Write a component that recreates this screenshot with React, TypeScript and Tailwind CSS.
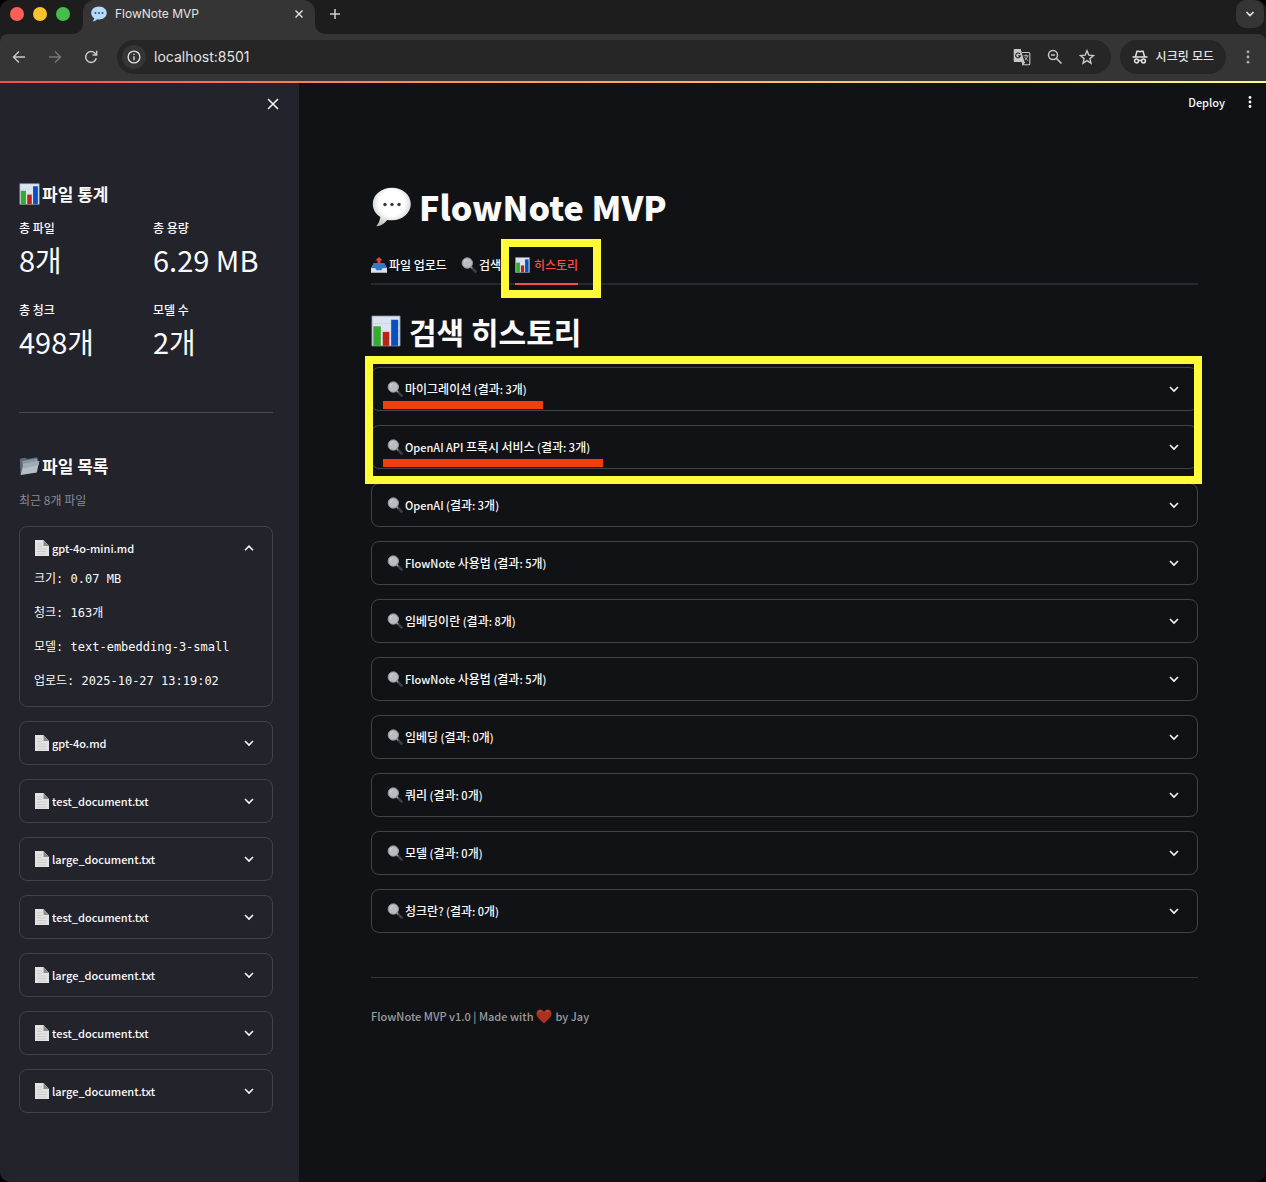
import { type ReactNode } from "react";

const files = [
  "gpt-4o.md",
  "test_document.txt",
  "large_document.txt",
  "test_document.txt",
  "large_document.txt",
  "test_document.txt",
  "large_document.txt",
];

const highlighted = [
  { query: "마이그레이션 (결과: 3개)", underline: "w-40" },
  { query: "OpenAI API 프록시 서비스 (결과: 3개)", underline: "w-[220px]" },
];

const history = [
  "OpenAI (결과: 3개)",
  "FlowNote 사용법 (결과: 5개)",
  "임베딩이란 (결과: 8개)",
  "FlowNote 사용법 (결과: 5개)",
  "임베딩 (결과: 0개)",
  "쿼리 (결과: 0개)",
  "모델 (결과: 0개)",
  "청크란? (결과: 0개)",
];

const metrics = [
  ["총 파일", "8개"],
  ["총 용량", "6.29 MB"],
  ["총 청크", "498개"],
  ["모델 수", "2개"],
];

const details = [
  "크기: 0.07 MB",
  "청크: 163개",
  "모델: text-embedding-3-small",
  "업로드: 2025-10-27 13:19:02",
];

/** Sets Hangul one step larger than the Latin text around it. */
function MixedText({ children }: { children: string }) {
  return children.split(/([가-힣]+)/).map((part, i) =>
    i % 2 ? (
      <span key={i} className="text-xs">
        {part}
      </span>
    ) : (
      part
    ),
  );
}

function ChartIcon({ className }: { className: string }) {
  return (
    <svg viewBox="0 0 32 34" className={className} aria-hidden="true">
      <rect x="1" y="1" width="30" height="32" fill="#dbe5f1" />
      <path d="M1 9h30M1 17h30M1 25h30" stroke="#c3cedd" strokeWidth=".7" />
      <rect x="2.5" y="12" width="8" height="21" fill="#37ab2f" />
      <rect x="12.5" y="18" width="7" height="15" fill="#b92512" />
      <rect x="21.5" y="5" width="7.5" height="28" fill="#0b51bd" />
      <path d="M1 1v32h30V1z" fill="none" stroke="#8792a0" strokeWidth=".8" />
    </svg>
  );
}

function SearchEmoji() {
  return (
    <svg viewBox="0 0 16 16" className="size-4 shrink-0" aria-hidden="true">
      <path d="m10.2 10.2 4.4 4.4" stroke="#3c4047" strokeWidth="2.6" strokeLinecap="round" />
      <path d="m9.6 9.6 1.6 1.6" stroke="#8d949c" strokeWidth="1.4" />
      <circle cx="6.3" cy="6" r="5.2" fill="#b9bcc0" stroke="#8e9399" strokeWidth="1" />
      <path d="M3 6a3.4 3.4 0 0 1 3-3.2" fill="none" stroke="#d3d6d9" strokeWidth="1" />
    </svg>
  );
}

function FileEmoji() {
  return (
    <svg viewBox="0 0 15 16" className="h-4 w-[15px] shrink-0" aria-hidden="true">
      <path d="M0 0h8.5L14 6v10H0z" fill="#e3e3e3" />
      <path d="M8.5 0 14 6H8.5z" fill="#8c8c8c" />
      <path d="M2 4h5M2 6.5h5M2 9h9.500M2 11.500h9.500M2 14h9.500" stroke="#c3c3c3" strokeWidth=".7" />
    </svg>
  );
}

function FolderEmoji() {
  return (
    <svg viewBox="0 0 21 20" className="h-5 w-[21px] shrink-0" aria-hidden="true">
      <path d="M.8 4.200 1.500 2.500l5-.8 1.500 1.200 10-1.700.8 1.300v4L3 18.500l-1.500.3z" fill="#5c6a75" />
      <path d="m3 5 15-2.500.5 3-14.500 4z" fill="#8998a3" />
      <path d="m4.500 8 15.800-3-2.500 11.500L1.700 19z" fill="#b4bfc7" />
      <path d="m4.500 8 15.800-3-.8 4L3.500 13z" fill="#a0adb7" />
    </svg>
  );
}

function BubbleEmoji() {
  return (
    <svg viewBox="0 0 40 40" className="size-10 shrink-0" aria-hidden="true">
      <defs>
        <radialGradient id="bubble" cx=".5" cy=".4" r=".6">
          <stop offset=".55" stopColor="#fff" />
          <stop offset="1" stopColor="#c4c4c4" />
        </radialGradient>
      </defs>
      <path
        d="M21 .8C10.300.8 1.800 7.800 1.800 17c0 5.500 2.900 10.100 7.500 13-.3 3.400-1.800 6.800-4 9.200 4.200-.2 8.200-2.600 10.900-6.300 1.500.3 3.100.4 4.800.4C31.500 33.300 39.800 26 39.800 17S31.500.8 21 .8z"
        fill="url(#bubble)"
      />
      <g fill="#3a3a3a">
        <circle cx="14" cy="17.500" r="1.700" />
        <circle cx="21" cy="17.500" r="1.700" />
        <circle cx="28" cy="17.500" r="1.700" />
      </g>
    </svg>
  );
}

function UploadEmoji() {
  return (
    <svg viewBox="0 0 16 16" className="size-4 shrink-0" aria-hidden="true">
      <path d="M2.500 7h11L16 11.500V15.500H0V11.500z" fill="#d5dbe2" />
      <path d="M2.500 6h11l1.800 5-3.800.5-1 2h-5l-1-2L.7 11z" fill="#3577c8" />
      <path d="M0 11.500h4.500l1.200 2h4.600l1.200-2H16v4H0z" fill="#dce1e7" />
      <path d="M8 0 4.300 3.500h2.200V6h3V3.500h2.200z" fill="#e5452f" />
    </svg>
  );
}

function HeartEmoji() {
  return (
    <svg viewBox="0 0 16 15" className="h-[15px] w-4 shrink-0" aria-hidden="true">
      <path d="M8 14.500C5.500 11.500.5 9 .5 4.700.5 2.200 2.200.6 4.300.6 6 .6 7.300 1.600 8 3 8.700 1.600 10 .6 11.700.6c2.100 0 3.800 1.600 3.800 4.100 0 4.300-5 6.800-7.500 9.800z" fill="#a93220" />
      <path d="M2.500 3.200c.6-1 2-1.400 3-.7M10 2.300c1-.6 2.500-.2 3.100.8" fill="none" stroke="#c96a5b" strokeWidth=".8" />
    </svg>
  );
}

function Chevron({ up = false }: { up?: boolean }) {
  return (
    <svg viewBox="0 0 10 10" className="size-2.5 shrink-0" fill="none" stroke="#fafafa" strokeWidth="1.600" aria-hidden="true">
      <path d={up ? "M1 7.200 5 3.200l4 4" : "M1 3 5 7l4-4"} />
    </svg>
  );
}

function Expander({ icon, label, children }: { icon: ReactNode; label: string; children?: ReactNode }) {
  return (
    <div className="rounded-lg border border-[#42434a]">
      <button className="flex h-[42px] w-full items-center pr-[18px] pl-[15px] text-left text-[11px] leading-5 font-medium" type="button" aria-expanded={!!children}>
        {icon}
        <span className="ml-0.5 flex-1 whitespace-nowrap">
          <MixedText>{label}</MixedText>
        </span>
        <Chevron up={!!children} />
      </button>
      {children}
    </div>
  );
}

function BrowserChrome() {
  return (
    <header className="bg-[#1d1d1d] font-[Inter,'Noto_Sans_CJK_KR',sans-serif] text-[#e3e3e3]">
      <div className="flex h-[34px] items-stretch">
        <div className="flex w-[83px] items-center gap-[9px] pb-1.5 pl-2.5">
          <span className="size-3.5 rounded-full bg-[#fb5f57]" />
          <span className="size-3.5 rounded-full bg-[#f9c22f]" />
          <span className="size-3.5 rounded-full bg-[#44bd4b]" />
        </div>
        <div className="relative flex w-[232px] items-center rounded-t-xl bg-[#353535] pr-2.5 pb-1.5 pl-2">
          <svg viewBox="0 0 10 10" className="absolute bottom-0 -left-2.5 size-2.5" aria-hidden="true">
            <path d="M10 0v10H0A10 10 0 0 0 10 0z" fill="#353535" />
          </svg>
          <svg viewBox="0 0 10 10" className="absolute -right-2.5 bottom-0 size-2.5" aria-hidden="true">
            <path d="M0 0v10h10A10 10 0 0 1 0 0z" fill="#353535" />
          </svg>
          <svg viewBox="0 0 16 16" className="size-4" aria-hidden="true">
            <path d="M8 .5C3.700.5.200 3.300.2 7c0 2.200 1.200 4 3 5.200-.1 1.200-.8 2.400-1.600 3.300 1.800-.1 3.300-.9 4.400-2.200.6.1 1.300.2 2 .2 4.300 0 7.800-2.900 7.800-6.500S12.300.5 8 .5z" fill="#b5d9f7" />
            <g fill="#27527c">
              <circle cx="4.500" cy="7" r="1" />
              <circle cx="8" cy="7" r="1" />
              <circle cx="11.500" cy="7" r="1" />
            </g>
          </svg>
          <span className="ml-2 flex-1 text-xs">FlowNote MVP</span>
          <button type="button" aria-label="탭 닫기" className="flex size-3 items-center justify-center">
            <svg viewBox="0 0 8 8" className="size-2" stroke="#e3e3e3" strokeWidth="1.400" aria-hidden="true">
              <path d="m.5.5 7 7m0-7-7 7" />
            </svg>
          </button>
        </div>
        <button type="button" aria-label="새 탭" className="ml-3.5 flex w-3 items-center pb-1.5">
          <svg viewBox="0 0 12 12" className="size-3" stroke="#d0d0d0" strokeWidth="1.500" aria-hidden="true">
            <path d="M6 1v10M1 6h10" />
          </svg>
        </button>
        <button type="button" aria-label="탭 검색" className="mr-0.5 ml-auto flex size-7 items-center justify-center rounded-[10px] bg-[#353535]">
          <svg viewBox="0 0 10 10" className="size-2.5" fill="none" stroke="#e3e3e3" strokeWidth="1.700" aria-hidden="true">
            <path d="M1.500 3 5 6.500 8.500 3" />
          </svg>
        </button>
      </div>

      <div className="flex h-[47px] items-center rounded-t-lg bg-[#353535] pr-[15px] pb-px pl-3">
        <div className="flex items-center gap-[22px]">
          <button type="button" aria-label="뒤로">
            <svg viewBox="0 0 14 14" className="size-3.5" fill="none" stroke="#c7c7c7" strokeWidth="1.500" aria-hidden="true">
              <path d="M13 7H1.800M7 1.500 1.500 7 7 12.500" />
            </svg>
          </button>
          <button type="button" aria-label="앞으로">
            <svg viewBox="0 0 14 14" className="size-3.5" fill="none" stroke="#757575" strokeWidth="1.500" aria-hidden="true">
              <path d="M1 7h11.200M7 1.500 12.500 7 7 12.500" />
            </svg>
          </button>
          <button type="button" aria-label="새로고침">
            <svg viewBox="0 0 14 14" className="size-3.5" fill="none" stroke="#c7c7c7" strokeWidth="1.500" aria-hidden="true">
              <path d="M12.300 8.300A5.400 5.400 0 1 1 11 3.300L12.600 5M12.700.8V5H8.500" />
            </svg>
          </button>
        </div>
        <div className="ml-[19px] flex h-[34px] flex-1 items-center rounded-full bg-[#262626] pr-4 pl-[5px]">
          <span className="flex size-6 items-center justify-center rounded-full bg-[#353535]">
            <svg viewBox="0 0 14 14" className="size-3.5" fill="none" stroke="#e3e3e3" strokeWidth="1.300" aria-hidden="true">
              <circle cx="7" cy="7" r="5.900" />
              <path d="M7 6.300v4M7 3.700v1.400" />
            </svg>
          </span>
          <input aria-label="주소" defaultValue="localhost:8501" className="ml-2 min-w-0 flex-1 bg-transparent text-sm outline-none" />
          <div className="flex items-center gap-4">
            <svg viewBox="0 0 18 18" className="size-[18px]" aria-hidden="true">
              <path d="M2 1h5.500l1 3H8v10H2C1.200 14 .7 13.500.7 12.700V2.300C.7 1.500 1.200 1 2 1z" fill="#c7c7c7" />
              <path d="M7.500 1 11.500 14 9.500 17 8.500 14H5V1z" fill="#c7c7c7" />
              <path d="M9 4.500h6.800c.6 0 1 .4 1 1v10.200c0 .6-.4 1-1 1H9.800l2-2.700" fill="none" stroke="#c7c7c7" strokeWidth="1.100" />
              <path d="M10.500 7.800H15.500M13 6.500v1.300M14.500 8c-.5 2-1.500 3.200-2.700 4.200M11.700 9c.8 1.500 2 2.600 3.500 3.600" fill="none" stroke="#c7c7c7" strokeWidth=".9" />
              <path d="M7 5.900a2.400 2.400 0 1 0 .4 2H5.200" fill="none" stroke="#262626" strokeWidth="1.100" />
            </svg>
            <svg viewBox="0 0 16 16" className="size-4" fill="none" stroke="#c7c7c7" strokeWidth="1.500" aria-hidden="true">
              <circle cx="6" cy="6" r="4.500" />
              <path d="m9.400 9.400 5.100 5.100M4 6h4" />
            </svg>
            <svg viewBox="0 0 16 16" className="size-4" fill="none" stroke="#c7c7c7" strokeWidth="1.400" aria-hidden="true">
              <path d="m8 1.700 1.800 4.400 4.700.4-3.600 3.100 1.100 4.600L8 11.700l-4 2.500 1.100-4.600-3.600-3.100 4.700-.4z" />
            </svg>
          </div>
        </div>
        <div className="ml-[9px] flex h-[34px] items-center rounded-full bg-[#262626] px-3 text-xs font-medium">
          <svg viewBox="0 0 16 14" className="h-3.5 w-4" fill="none" stroke="#e3e3e3" strokeWidth="1.500" aria-hidden="true">
            <path d="M.5 7h15M3.500 6.500 5 1.300h1.300L8 1.800l1.700-.5H11l1.500 5.200M6.500 11c.8-.7 2.200-.7 3 0" />
            <circle cx="4.500" cy="11" r="1.900" />
            <circle cx="11.500" cy="11" r="1.900" />
          </svg>
          <span className="ml-2">시크릿 모드</span>
        </div>
        <button type="button" aria-label="Chrome 메뉴" className="ml-[19px]">
          <svg viewBox="0 0 6 14" className="h-3.5 w-1.5" fill="#b0b0b0" aria-hidden="true">
            <circle cx="3" cy="1.800" r="1.400" />
            <circle cx="3" cy="7" r="1.400" />
            <circle cx="3" cy="12.200" r="1.400" />
          </svg>
        </button>
      </div>
      <div className="h-0.5 bg-linear-to-r from-[#f0524b] to-[#fffa85]" />
    </header>
  );
}

function Sidebar() {
  return (
    <aside className="w-[299px] shrink-0 bg-[#23232b] pr-[26px] pl-[19px]">
      <div className="-mr-[7px] flex justify-end pt-3.5">
        <button type="button" aria-label="사이드바 닫기" className="p-px">
          <svg viewBox="0 0 12 12" className="size-3" stroke="#fafafa" strokeWidth="1.500" aria-hidden="true">
            <path d="m1 1 10 10m0-10L1 11" />
          </svg>
        </button>
      </div>
      <h3 className="mt-[71px] flex h-6 items-center gap-0.5 text-[17px] leading-6 font-bold">
        <ChartIcon className="h-[22px] w-[21px]" />
        파일 통계
      </h3>
      <dl className="mt-3 grid grid-cols-2 gap-x-3.5 gap-y-5">
        {metrics.map(([label, value]) => (
          <div key={label}>
            <dt className="text-xs leading-5 font-medium">{label}</dt>
            <dd className="text-[29px] leading-[42px] whitespace-nowrap">{value}</dd>
          </div>
        ))}
      </dl>
      <hr className="mt-[50px] border-[#4a4b52]" />
      <h3 className="mt-[41px] flex h-6 items-center gap-0.5 text-[17px] leading-6 font-bold">
        <FolderEmoji />
        파일 목록
      </h3>
      <p className="mt-3 text-xs leading-5 text-[#888a93]">최근 8개 파일</p>
      <div className="mt-4 flex flex-col gap-3.5">
        <Expander icon={<FileEmoji />} label="gpt-4o-mini.md">
          <div className="flex flex-col gap-3.5 pb-[15px] pl-3.5 font-['DejaVu_Sans_Mono','Noto_Sans_CJK_KR',monospace] text-xs leading-5">
            {details.map((line) => (
              <p key={line} className="h-5 whitespace-nowrap">{line}</p>
            ))}
          </div>
        </Expander>
        {files.map((name, i) => (
          <Expander key={i} icon={<FileEmoji />} label={name} />
        ))}
      </div>
    </aside>
  );
}

export default function App() {
  return (
    <div className="bg-black">
      <div className="flex min-h-screen flex-col overflow-hidden rounded-[10px] bg-[#111216] font-['Noto_Sans_CJK_KR',sans-serif] text-[#fafafa]">
        <BrowserChrome />
        <div className="flex flex-1">
          <Sidebar />
          <div className="min-w-0 flex-1">
            <div className="flex h-[38px] items-center justify-end gap-[23px] pr-3.5 text-[11px] font-medium">
              <button type="button">Deploy</button>
              <button type="button" aria-label="메뉴">
                <svg viewBox="0 0 4 12" className="h-3 w-1" fill="#fafafa" aria-hidden="true">
                  <circle cx="2" cy="1.500" r="1.400" />
                  <circle cx="2" cy="6" r="1.400" />
                  <circle cx="2" cy="10.500" r="1.400" />
                </svg>
              </button>
            </div>
            <main className="pt-[62px] pr-[68px] pl-[72px]">
              <h1 className="flex h-12 items-center gap-2 text-[34px] leading-[48px] font-black">
                <BubbleEmoji />
                FlowNote MVP
              </h1>
              <div role="tablist" className="mt-4 flex h-[38px] gap-3.5 border-b-2 border-[#27282f] text-xs font-medium">
                <button type="button" role="tab" className="flex items-center gap-0.5">
                  <UploadEmoji />
                  파일 업로드
                </button>
                <button type="button" role="tab" className="flex items-center gap-0.5">
                  <SearchEmoji />
                  검색
                </button>
                <button type="button" role="tab" aria-selected="true" className="relative -mb-0.5 flex items-center gap-1 border-b-2 border-[#ff4b4b] text-[#ff4b4b]">
                  <ChartIcon className="h-4 w-[15px]" />
                  히스토리
                  <span className="absolute -top-2 -right-[23px] -bottom-[15px] -left-3.5 border-8 border-[#fffb38]" />
                </button>
              </div>
              <h2 className="mt-6 flex h-11 items-center gap-2 text-[30px] leading-[44px] font-bold">
                <ChartIcon className="h-8 w-[30px]" />
                검색 히스토리
              </h2>
              <div className="relative mt-3.5 flex flex-col gap-3.5">
                {highlighted.map(({ query, underline }) => (
                  <div key={query} className="relative">
                    <Expander icon={<SearchEmoji />} label={query} />
                    <span className={`absolute bottom-0.5 left-3 h-2 bg-[#f33c10] ${underline}`} />
                  </div>
                ))}
                <span className="pointer-events-none absolute -top-[11px] -right-1 -bottom-[15px] -left-1.5 z-10 border-8 border-[#fffb38]" />
              </div>
              <div className="mt-3.5 flex flex-col gap-3.5">
                {history.map((query, i) => (
                  <Expander key={i} icon={<SearchEmoji />} label={query} />
                ))}
              </div>
              <hr className="mt-11 border-[#36373c]" />
              <footer className="mt-7 flex h-5 items-center gap-[3px] text-[11px] font-medium text-[#9b9c9f]">
                FlowNote MVP v1.0 | Made with
                <HeartEmoji />
                by Jay
              </footer>
            </main>
          </div>
        </div>
      </div>
    </div>
  );
}
